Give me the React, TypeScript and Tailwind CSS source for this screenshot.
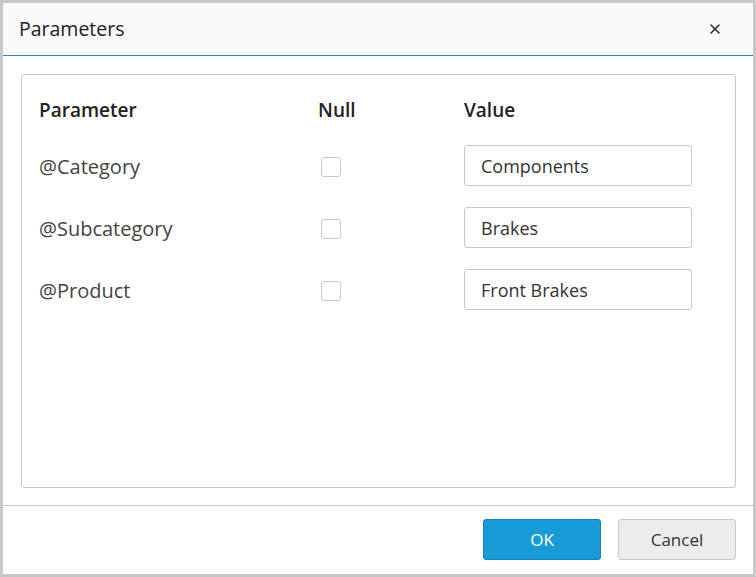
import { X } from 'lucide-react';

const rows = [
  { name: '@Category', value: 'Components' },
  { name: '@Subcategory', value: 'Brakes' },
  { name: '@Product', value: 'Front Brakes' },
];

export default function App() {
  return (
    <div
      className="w-[756px] h-[577px] bg-[#c8c8c8] p-[3px] text-[#333333]"
      style={{ fontFamily: '"Open Sans", "Noto Sans", sans-serif' }}
    >
      <div className="h-full flex flex-col bg-white">
        {/* Header */}
        <div className="h-[53px] shrink-0 bg-[#fafafa] border-b border-[#1e8fc6] flex items-center justify-between pl-4 pr-[30px]">
          <span className="text-[19.5px] text-[#222]">Parameters</span>
          <X className="w-[16px] h-[16px] text-[#222]" strokeWidth={2.2} />
        </div>

        {/* Body */}
        <div className="flex-1 pt-[18px] pb-[17px] pl-[18px] pr-[17px]">
          <div className="h-full border border-[#c8c8c8] rounded-[3px] pt-[21px] px-[17px]">
            <div className="grid grid-cols-[279px_146px_1fr] h-[28px] items-center text-[19px] font-semibold text-[#222]">
              <span>Parameter</span>
              <span>Null</span>
              <span>Value</span>
            </div>
            <div className="flex flex-col gap-[21px] mt-[21px]">
              {rows.map((r) => (
                <div key={r.name} className="grid grid-cols-[279px_146px_1fr] h-[41px] items-center">
                  <span className="text-[20px] text-[#444] pt-[2px]">{r.name}</span>
                  <span className="pl-[3px] pt-[2px]">
                    <span className="block w-[20px] h-[20px] border border-[#c8c8c8] rounded-[3px] bg-white" />
                  </span>
                  <div className="w-[228px] h-[41px] border border-[#c8c8c8] rounded-[3px] flex items-center px-4 pt-[2px] text-[18px] text-[#333]">
                    {r.value}
                  </div>
                </div>
              ))}
            </div>
          </div>
        </div>

        {/* Footer */}
        <div className="h-[69px] shrink-0 border-t border-[#c8c8c8] flex justify-end items-start gap-[17px] pt-[13px] pr-[17px]">
          <button className="w-[118px] h-[41px] rounded-[3px] bg-[#189bd7] border border-[#1482b5] text-white text-[17px]">
            OK
          </button>
          <button className="w-[118px] h-[41px] rounded-[3px] bg-[#ececec] border border-[#c8c8c8] text-[#333] text-[17px]">
            Cancel
          </button>
        </div>
      </div>
    </div>
  );
}
